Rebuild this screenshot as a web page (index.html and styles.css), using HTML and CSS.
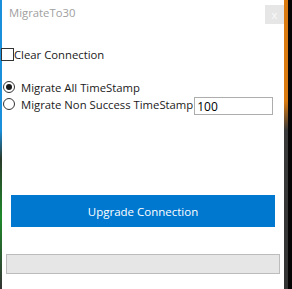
FILE: index.html
```html
<!DOCTYPE html>
<html lang="en">
<head>
  <meta charset="UTF-8" />
  <title>MigrateTo30</title>
  <link rel="stylesheet" href="styles.css">
</head>
<body>

<div class="desk">
  <div class="edge-left"></div>

  <div class="window">
    <div class="title-bar">
      <span class="title">MigrateTo30</span>
      <button class="close-button">x</button>
    </div>

    <label class="check-row">
      <span class="check-box"></span>
      <span>Clear Connection</span>
    </label>

    <div class="options">
      <label class="radio-row">
        <span class="radio checked"></span>
        <span>Migrate All TimeStamp</span>
      </label>
      <label class="radio-row">
        <span class="radio"></span>
        <span>Migrate Non Success TimeStamp</span>
        <span class="count-input">100</span>
      </label>
    </div>

    <button class="upgrade-button">Upgrade Connection</button>

    <div class="progress"></div>
  </div>

  <div class="edge-right">
    <div class="edge-stripe"></div>
    <div class="edge-dark"></div>
  </div>
</div>

</body>
</html>
```

FILE: styles.css
```css
body {
  margin: 0;
  font-family: 'Open Sans', 'Noto Sans', sans-serif;
  font-size: 11.3px;
  color: #1a1a1a;
}

.desk {
  display: flex;
  width: 292px;
  height: 289px;
  overflow: hidden;
}

.edge-left {
  width: 2px;
  background: linear-gradient(#1a8fdc 0, #1a8fdc 45%, #2b3a2a 55%, #1f8a2a 75%, #333 100%);
}

.window {
  width: 282px;
  background: #fff;
  display: flex;
  flex-direction: column;
}

.title-bar {
  display: flex;
  justify-content: space-between;
  align-items: flex-start;
  padding: 5px 0 0 7px;
  height: 39px;
  box-sizing: border-box;
}

.title {
  color: #a0a0a0;
  font-size: 11.3px;
  line-height: 16px;
}

.close-button {
  width: 19px;
  height: 19px;
  border: none;
  padding: 0;
  background: #e6e6e6;
  color: #fafafa;
  font-family: inherit;
  font-size: 11px;
  line-height: 19px;
}

.check-row {
  display: flex;
  align-items: center;
  height: 16px;
  margin-top: 7px;
  margin-left: -1px;
}

.check-box {
  width: 11px;
  height: 11px;
  border: 1px solid #333;
}

.options {
  display: flex;
  flex-direction: column;
  gap: 1px;
  margin-top: 17px;
}

.radio-row {
  display: flex;
  align-items: center;
  height: 16px;
  padding-left: 1px;
}

.radio {
  width: 10px;
  height: 10px;
  border: 1px solid #333;
  border-radius: 50%;
  margin-right: 6px;
  position: relative;
}

.radio.checked::after {
  content: "";
  position: absolute;
  left: 2px;
  top: 2px;
  width: 6px;
  height: 6px;
  border-radius: 50%;
  background: #1a1a1a;
}

.count-input {
  width: 75px;
  height: 16px;
  border: 1px solid #adadad;
  margin-left: 1px;
  margin-top: 3px;
  padding-left: 2px;
  line-height: 17px;
  font-size: 12px;
  color: #000;
}

.upgrade-button {
  margin: 83px 0 0 9px;
  width: 264px;
  height: 32px;
  border: none;
  background: #0078d0;
  color: #fff;
  font-family: inherit;
  font-size: 11.5px;
}

.progress {
  margin: 27px 0 0 4px;
  width: 272px;
  height: 18px;
  border: 1px solid #bcbcbc;
  background: #e6e6e6;
}

.edge-right {
  display: flex;
  width: 8px;
}

.edge-stripe {
  width: 4px;
  background: linear-gradient(#d97a10 0, #d97a10 35%, #3a3a3a 45%, #333 100%);
}

.edge-dark {
  width: 4px;
  background: #050505;
}
```
